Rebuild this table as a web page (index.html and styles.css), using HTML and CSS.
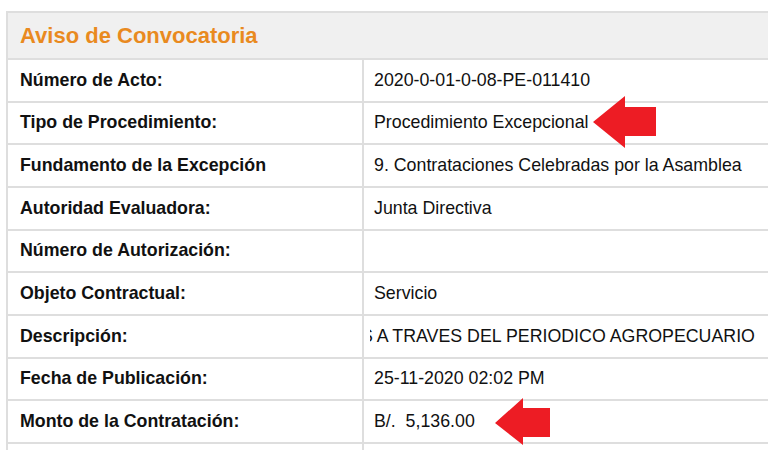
FILE: index.html
```html
<!DOCTYPE html>
<html lang="es">
<head>
  <meta charset="UTF-8">
  <title>Aviso de Convocatoria</title>
  <link rel="stylesheet" href="styles.css">
</head>
<body>
  <div class="page">
    <table class="aviso">
      <colgroup>
        <col class="col-label">
        <col class="col-value">
      </colgroup>
      <tr class="head">
        <th colspan="2">Aviso de Convocatoria</th>
      </tr>
      <tr>
        <td class="label">Número de Acto:</td>
        <td class="value">2020-0-01-0-08-PE-011410</td>
      </tr>
      <tr>
        <td class="label">Tipo de Procedimiento:</td>
        <td class="value">Procedimiento Excepcional</td>
      </tr>
      <tr>
        <td class="label">Fundamento de la Excepción</td>
        <td class="value">9. Contrataciones Celebradas por la Asamblea</td>
      </tr>
      <tr>
        <td class="label">Autoridad Evaluadora:</td>
        <td class="value">Junta Directiva</td>
      </tr>
      <tr>
        <td class="label">Número de Autorización:</td>
        <td class="value"></td>
      </tr>
      <tr>
        <td class="label">Objeto Contractual:</td>
        <td class="value">Servicio</td>
      </tr>
      <tr>
        <td class="label">Descripción:</td>
        <td class="value clip"><div class="scroll">S A TRAVES DEL PERIODICO AGROPECUARIO</div></td>
      </tr>
      <tr>
        <td class="label">Fecha de Publicación:</td>
        <td class="value">25-11-2020 02:02 PM</td>
      </tr>
      <tr>
        <td class="label">Monto de la Contratación:</td>
        <td class="value">B/.&nbsp; 5,136.00</td>
      </tr>
      <tr>
        <td class="label"></td>
        <td class="value"></td>
      </tr>
    </table>

    <!-- red markers -->
    <svg class="arrow arrow-tipo" viewBox="0 0 63 52">
      <polygon points="0,26 32,0 32,11 63,11 63,40 32,40 32,52" />
    </svg>
    <svg class="arrow arrow-monto" viewBox="0 0 55 47">
      <polygon points="0,25 28,0 28,10 55,10 55,39 28,39 28,47" />
    </svg>
  </div>
</body>
</html>
```

FILE: styles.css
```css
* {
  margin: 0;
  padding: 0;
  box-sizing: border-box;
}

body {
  font-family: "Liberation Sans", Arial, sans-serif;
  background-color: #fff;
  color: #111;
  overflow: hidden;
}

.page {
  position: relative;
  width: 768px;
  height: 450px;
  overflow: hidden;
  padding: 11px 0 0 6px;
}

.aviso {
  border-collapse: collapse;
  width: 920px;
  table-layout: fixed;
}

.col-label {
  width: 356px;
}

.aviso th,
.aviso td {
  border: 2px solid #dedede;
  text-align: left;
  vertical-align: middle;
  white-space: nowrap;
}

.head th {
  height: 47px;
  background-color: #f0f0f0;
  color: #e98a1f;
  font-size: 22px;
  font-weight: bold;
  padding: 0 12px;
}

.aviso td {
  height: 42.67px;
  font-size: 17.8px;
}

.label {
  font-weight: bold;
  padding: 0 12px;
}

.value {
  padding: 0 10px;
}

.clip {
  padding: 0 0 0 6px;
}

.scroll {
  overflow: hidden;
  text-indent: -9px;
}

.arrow {
  position: absolute;
  fill: #ed1c24;
}

.arrow-tipo {
  left: 593px;
  top: 96px;
  width: 63px;
  height: 52px;
}

.arrow-monto {
  left: 495px;
  top: 398px;
  width: 55px;
  height: 47px;
}
```
